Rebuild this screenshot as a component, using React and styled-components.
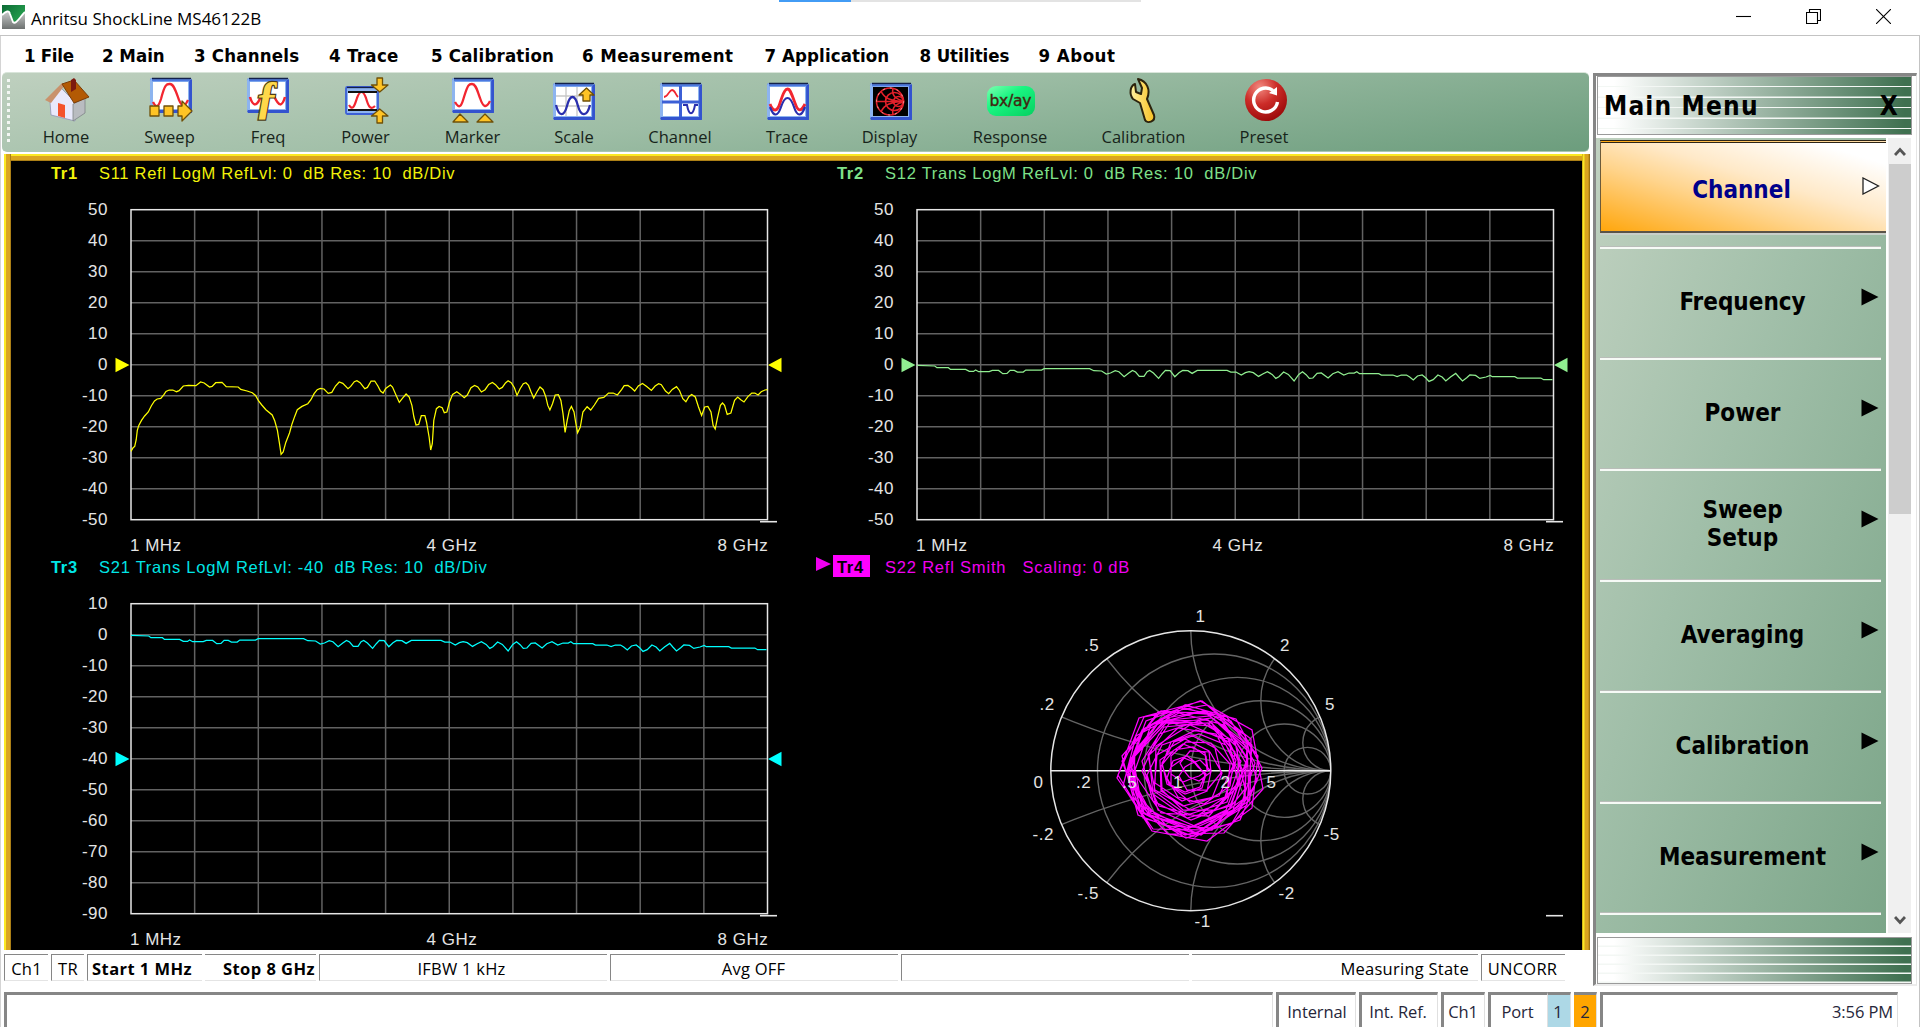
import React from "react";
import styled, { createGlobalStyle } from "styled-components";

const GlobalStyle = createGlobalStyle`
  * { box-sizing: border-box; }
  html, body { margin: 0; padding: 0; background: #fff; overflow: hidden; }
`;

const ui = `"Open Sans", "Noto Sans", sans-serif`;
const tahoma = `"DejaVu Sans Condensed", "DejaVu Sans", sans-serif`;
const arial = `"Liberation Sans", Arial, sans-serif`;

/* ---------- window shell ---------- */

const Window = styled.div`
  width: 1920px;
  height: 1027px;
  display: flex;
  flex-direction: column;
  overflow: hidden;
  background: #fff;
  font-family: ${ui};
  color: #000;
`;

const TitleBar = styled.header`
  position: relative;
  flex: none;
  height: 36px;
  display: flex;
  align-items: center;
  padding: 0 29px 2px 2px;
  border-bottom: 1px solid #c3c3c3;
`;

const TitleText = styled.h1`
  margin: 0 0 0 6px;
  padding-top: 3px;
  flex: 1;
  font-size: 17px;
  font-weight: 400;
  letter-spacing: 0;
`;

const WindowButtons = styled.div`
  display: flex;
  gap: 55px;
`;

const Progress = styled.div`
  position: absolute;
  left: 779px;
  top: 0;
  width: 362px;
  height: 2px;
  background: linear-gradient(to right, #429cf5 72px, #e3e3e3 72px);
`;

const Frame = styled.div`
  flex: 1;
  min-height: 0;
  display: flex;
  flex-direction: column;
  border-right: 1px solid #c3c3c3;
  box-shadow: inset 1px 0 0 #d4d4d4;
`;

const MenuBar = styled.nav`
  flex: none;
  height: 36px;
  display: flex;
  align-items: center;
  padding-left: 24px;
  padding-top: 2px;
`;

const MenuItem = styled.span`
  width: ${(p) => p.$w}px;
  font: 700 18.5px ${tahoma};
  letter-spacing: ${(p) => p.$track}px;
  white-space: nowrap;
`;

const Body = styled.div`
  flex: none;
  height: 914px;
  display: flex;
`;

const Main = styled.main`
  width: 1593px;
  display: flex;
  flex-direction: column;
`;

/* ---------- toolbar ---------- */

const ToolBar = styled.div`
  flex: none;
  height: 80px;
  width: 1587px;
  margin-left: 2px;
  display: flex;
  gap: 49px;
  padding: 5px 0 0 38px;
  border-radius: 5px;
  border-top: 1px solid #d9e5da;
  border-bottom: 1px solid #a9c7b1;
  background:
    linear-gradient(172deg, #bfd0bf 0%, #9dbda5 48%, #6c9d7d 100%);
`;

const Grip = styled.i`
  width: 3px;
  height: 66px;
  margin: 1px -19.5px 0 -33px;
  background: repeating-linear-gradient(to bottom, #f3f7f3 0 3px, transparent 3px 6px);
`;

const Tool = styled.button`
  width: ${(p) => p.$w}px;
  border: 0;
  padding: 0;
  background: none;
  display: flex;
  flex-direction: column;
  align-items: center;
  font: 400 16.5px/22px ${ui};
  letter-spacing: 0;
  color: #17241a;
`;

const ToolIcon = styled.span`
  height: 48px;
  display: flex;
  align-items: flex-start;
  justify-content: center;
  margin-left: ${(p) => p.$shift || 0}px;
`;

const ScreenIcon = ({ children, y = 5, h = 37, dark }) => (
  <g>
    <rect x="1" y={y} width="42" height={h} rx="2.5" fill="#3c5fd6" />
    <rect x="1" y={y} width="41" height={h - 1.5} rx="2.5" fill="#8db4ef" />
    <path d={`M2 ${y + h - 1.5}H41.5V${y + 2}`} fill="none" stroke="#3353cf" strokeWidth="2.8" />
    <path d={`M3 ${y + 2.2}H41`} stroke="#4c78e0" strokeWidth="2" />
    <path d={`M3 ${y + 0.6}H42`} stroke="#13204a" strokeWidth="1.5" />
    <rect x="4" y={y + 4} width="35" height={h - 8} fill={dark ? "#000" : "#fff"} />
    {children}
  </g>
);

const Gold = ({ d }) => <path d={d} fill="#ffc425" stroke="#6f5008" strokeWidth="1.3" strokeLinejoin="round" />;

const icons = {
  home: (
    <g>
      <path d="M5 24L16 10L30 24V43L6 37Z" fill="#e9e9fb" stroke="#8f94b5" strokeWidth=".8" />
      <path d="M28 26L40 20V35L28 43Z" fill="#b9bcc0" stroke="#7e8386" strokeWidth=".8" />
      <path d="M13 25L20 27V40L13 38Z" fill="#f4532c" />
      <path d="M0 22L17 5L20 7L6 25Z" fill="#c9926c" />
      <path d="M17 6L29 25L44 19L29 2Z" fill="#b35a04" stroke="#7c3d08" strokeWidth="1" />
      <path d="M26 2L29 0L31 2V11L26 14Z" fill="#7c1a10" />
    </g>
  ),
  sweep: (
    <g>
      <ScreenIcon y={0} h={35}>
        <path d="M4 24C8 32 10 27 12 21C16 5 18 6 21 6C25 6 27 14 30 22C34 31 36 28 39 22" fill="none" stroke="#f22630" strokeWidth="2.3" />
      </ScreenIcon>
      <Gold d="M1 28h9v10H1zM15 28h9v10h-9zM29 28h4V23L43 33L33 43V38H29z" />
    </g>
  ),
  freq: (
    <g>
      <ScreenIcon y={0} h={35}>
        <path d="M4 19C7 29 11 29 15 18M28 18C33 29 36 29 39 19" fill="none" stroke="#f22630" strokeWidth="2.5" />
      </ScreenIcon>
      <text x="9" y="35" fontFamily="Liberation Serif, serif" fontStyle="italic" fontWeight="700" fontSize="47" fill="#ffd84a" stroke="#4d3d16" strokeWidth="2.4" paintOrder="stroke">ƒ</text>
    </g>
  ),
  power: (
    <g>
      <rect x="1" y="9" width="32" height="27" rx="1.5" fill="#8db4ef" stroke="#3c5fd6" strokeWidth="1.8" />
      <path d="M2 9.500H33" stroke="#13204a" strokeWidth="1.3" />
      <rect x="3" y="14" width="28" height="18" fill="#fff" />
      <path d="M4 27C8 34 10 26 12 20C15 12 18 12 21 20C23 27 25 33 30 28" fill="none" stroke="#f22630" strokeWidth="2.2" />
      <path d="M3 14H32M3 32H32" stroke="#111" strokeWidth="2.2" />
      <Gold d="M32 0h5.500V7h5.500L34.700 14L26.500 7h5.500zM32 45h5.500V38h5.500L34.700 31L26.500 38h5.500z" />
    </g>
  ),
  marker: (
    <g>
      <ScreenIcon y={0} h={35}>
        <path d="M4 24C9 33 11 26 13 19C17 6 18 6 21 6C25 6 26 12 29 20C32 29 35 31 39 23" fill="none" stroke="#f22630" strokeWidth="2.3" />
      </ScreenIcon>
      <Gold d="M2 44L9 36L17 44zM26 44L34 36L42 44z" />
    </g>
  ),
  scale: (
    <ScreenIcon>
      <path d="M4 18H39M4 28H39M14 9V38M25 9V38" stroke="#c7c7c7" strokeWidth="1.3" />
      <path d="M4 27C7 39 12 39 15 28C18 16 23 16 26 28C29 39 35 39 38 27" fill="none" stroke="#2a2fae" strokeWidth="2.3" />
      <Gold d="M31 23V17H27L34.500 10L42 17H38V23z" />
    </ScreenIcon>
  ),
  channel: (
    <ScreenIcon>
      <path d="M21.500 8V39M3 24H40" stroke="#3c5fd6" strokeWidth="3" />
      <path d="M5 19C9 19 10 12 13 12C16 12 16 16 19 19" fill="none" stroke="#f22630" strokeWidth="1.800" />
      <path d="M24 27H28C30 38 34 38 36 27H39" fill="none" stroke="#2a2fae" strokeWidth="2" />
    </ScreenIcon>
  ),
  trace: (
    <ScreenIcon>
      <path d="M4 26C8 36 12 32 14 25C18 12 20 11 21.500 11C24 11 25 14 29 25C32 34 35 34 39 26" fill="none" stroke="#f22630" strokeWidth="2.800" />
      <path d="M4 29C8 40 12 38 15 29C19 17 24 17 28 29C31 38 35 40 39 29" fill="none" stroke="#2a2fae" strokeWidth="2.200" />
    </ScreenIcon>
  ),
  display: (
    <ScreenIcon dark>
      <g fill="none" stroke="#e3202a" strokeWidth="1.600">
        <circle cx="21" cy="23.500" r="13.500" />
        <circle cx="25.500" cy="23.500" r="9" />
        <circle cx="29.500" cy="23.500" r="5" />
        <path d="M7 23.500H35M12 13C15 20 21 23 35 23.500M12 34C15 27 21 24 35 23.500M24 10C22 19 29 22 35 23M24 37C22 28 29 25 35 24" />
      </g>
      <circle cx="21" cy="23.500" r="13.500" fill="none" stroke="#f3a0a4" strokeWidth="1" strokeDasharray="2 5" />
    </ScreenIcon>
  ),
  response: (
    <g>
      <rect x="-2" y="8" width="48" height="30" rx="9" fill="url(#mint)" />
      <text x="0.500" y="28" fontFamily="DejaVu Sans, sans-serif" fontSize="15.500" textLength="42" fill="#432410" stroke="#432410" strokeWidth=".4">bx/ay</text>
    </g>
  ),
  calibration: (
    <path
      d="M13 1L17 10L16 16L11 14L10 6C5 8 4 16 8 21L15 25L20 42C22 46 31 44 29 37L22 21C26 12 22 3 13 1Z"
      transform="translate(3 0)" fill="url(#wrench)" stroke="#2c230d" strokeWidth="2" strokeLinejoin="round"
    />
  ),
  preset: (
    <g>
      <circle cx="22" cy="22" r="21" fill="url(#redball)" />
      <path d="M29 12.500A12 12 0 1 0 33.500 24" fill="none" stroke="#fff" strokeWidth="3.400" />
      <path d="M25 15L33 9V17.500Z" fill="#fff" />
    </g>
  ),
};

const tools = [
  ["Home", "home", 53, 2], ["Sweep", "sweep", 56, 3], ["Freq", "freq", 43, 0], ["Power", "power", 54, 3],
  ["Marker", "marker", 62, 0], ["Scale", "scale", 43, 0], ["Channel", "channel", 71, 2], ["Trace", "trace", 45, 1],
  ["Display", "display", 62, 3], ["Response", "response", 81, 2], ["Calibration", "calibration", 88, 0], ["Preset", "preset", 55, 4],
];

const Icon = ({ name }) => (
  <svg width="44" height="46" viewBox="0 0 44 46" style={{ overflow: "visible" }}>
    {icons[name]}
  </svg>
);

/* ---------- traces ---------- */

const Screen = styled.section`
  flex: none;
  width: 1586px;
  height: 796px;
  margin: 2px 0 0 4px;
  padding: 7px 8px 0 7px;
  display: grid;
  grid-template-columns: 786px 1fr;
  grid-template-rows: 394px 1fr;
  background:
    linear-gradient(to right, #fbe924 0 2px, #daa520 2px 6px, #7d5a0c 7px) left / 7px 100% no-repeat,
    linear-gradient(to right, #b58a12 0, #fbe924 1px 2px, #daa520 3px 6px, #8a640e 8px) right / 8px 100% no-repeat,
    linear-gradient(to bottom, #fbe924 0 2px, #daa520 2px 6px, #7d5a0c 7px) top / 100% 7px no-repeat,
    #000;
`;

const Panel = styled.div`
  display: flex;
  flex-direction: column;
  min-width: 0;
  color: ${(p) => p.$color};
  font: 400 16.5px/24px ${arial};
`;

const PanelHead = styled.div`
  height: 24px;
  display: grid;
  grid-template-columns: 19px 17px 52px auto;
  align-items: start;
  white-space: pre;
`;

const ActiveMark = styled.i`
  grid-column: 2;
  width: 0;
  height: 0;
  margin-top: 2px;
  border-left: 15px solid currentColor;
  border-top: 7px solid transparent;
  border-bottom: 7px solid transparent;
`;

const TraceName = styled.b`
  grid-column: 3;
  justify-self: start;
  height: 22px;
  padding: 0 6px 0 4px;
  line-height: 24px;
  letter-spacing: 0.7px;
  color: ${(p) => (p.$active ? "#000" : "inherit")};
  background: ${(p) => (p.$active ? "#ff00ff" : "none")};
`;

const TraceInfo = styled.span`
  grid-column: 4;
  letter-spacing: ${(p) => p.$track}px;
`;

const ChartText = styled.text`
  font: 400 17px ${arial};
  fill: #e4e4e4;
  letter-spacing: 0.5px;
`;

const PX = 120, PY = 24.7, PW = 636.5, PH = 310;

const reflection = `250,903 254,892 257,888 260,868 262,840 265,825 270,810 276,797 283,785 289,766 295,752 300,746 307,744 313,733 317,723 323,719 330,719 337,724 342,721 350,707 360,705 374,706 383,695 390,698 400,710 405,708 412,697 424,696 432,709 455,710 460,717 472,722 482,727 488,735 494,752 500,764 508,778 520,794 525,812 530,840 534,880 537,912 541,905 546,876 553,848 558,820 563,798 568,778 577,768 588,760 594,748 600,730 606,718 612,714 619,716 627,729 634,726 641,707 648,695 655,699 665,715 670,708 677,694 682,691 688,697 697,715 702,711 709,692 716,692 722,707 727,722 732,728 737,714 746,704 750,710 757,735 763,756 769,744 776,731 782,740 787,765 791,800 795,824 800,822 805,796 812,796 815,815 820,860 823,899 826,880 829,810 834,775 839,768 845,772 849,787 854,785 859,755 865,732 873,724 880,732 887,742 893,734 900,712 907,705 913,710 920,725 927,718 934,702 941,696 947,703 954,716 960,711 966,698 971,691 977,697 983,712 988,735 994,715 1000,700 1005,697 1010,705 1015,725 1020,743 1026,725 1032,710 1038,718 1043,738 1047,765 1051,779 1056,760 1061,734 1067,733 1072,750 1076,790 1080,846 1084,810 1088,780 1092,768 1097,785 1100,815 1104,847 1109,830 1114,785 1122,769 1129,779 1136,764 1144,744 1154,741 1163,728 1172,728 1180,734 1188,718 1193,706 1200,705 1207,713 1213,722 1220,707 1228,699 1236,708 1245,720 1252,707 1259,700 1264,703 1272,722 1278,730 1285,717 1293,709 1299,721 1305,745 1311,754 1317,738 1322,732 1329,740 1335,770 1341,795 1347,770 1353,768 1359,785 1363,825 1367,836 1371,805 1377,765 1381,758 1385,765 1390,792 1397,788 1404,750 1410,740 1416,748 1422,755 1430,738 1437,728 1443,728 1449,734 1455,724 1462,719 1467,718`;

const transmission = `262,645 296,647 300,652 322,652 326,657 355,657 362,663 370,663 374,659 380,664 400,664 406,660 418,660 426,670 434,669 440,660 448,660 454,665 465,665 470,659 500,659 505,655 592,655 600,661 615,662 624,671 632,668 641,661 648,664 658,679 667,668 674,660 680,665 687,678 696,678 702,664 707,660 714,668 724,684 731,670 737,660 746,661 755,679 763,667 770,660 780,661 788,669 798,660 855,660 862,665 872,665 882,674 890,667 897,664 905,667 915,678 924,670 932,664 941,672 948,684 954,679 963,665 972,672 983,692 992,672 999,664 1006,673 1012,684 1019,683 1027,669 1035,668 1048,683 1057,670 1067,664 1078,674 1088,668 1098,668 1103,664 1108,670 1145,670 1150,674 1172,674 1180,679 1188,674 1198,674 1204,680 1211,689 1219,677 1228,674 1235,683 1241,693 1249,688 1258,674 1266,680 1273,692 1282,680 1292,669 1298,680 1305,692 1313,682 1319,674 1330,675 1338,684 1350,680 1358,675 1362,679 1405,679 1410,683 1455,683 1460,688 1477,688`;

/* Sweep samples are stored on a 1217-unit span with 93 units per division, zero level at 643. */
const samples = (raw, zeroDiv) => {
  const pts = raw.split(" ").map((p) => p.split(",").map(Number));
  const first = pts[0][0];
  return pts
    .map(([x, y]) => `${(PX + ((x - first) / 1217) * PW).toFixed(1)},${(PY + zeroDiv * 31 + (y - 643) / 3).toFixed(1)}`)
    .join(" ");
};

const Rect = ({ top, refDiv, zeroDiv, data, color }) => {
  const steps = [...Array(11).keys()];
  const ry = PY + refDiv * 31 + 0.3;
  return (
    <svg width="785" height="370">
      <g stroke="#626262" strokeWidth="1.5">
        {steps.slice(1, 10).map((i) => (
          <React.Fragment key={i}>
            <line x1={PX + i * PW / 10} x2={PX + i * PW / 10} y1={PY} y2={PY + PH} />
            <line x1={PX} x2={PX + PW} y1={PY + i * 31} y2={PY + i * 31} />
          </React.Fragment>
        ))}
      </g>
      <rect x={PX} y={PY} width={PW} height={PH} fill="none" stroke="#e6e6e6" strokeWidth="1.5" />
      <path d="M749 336.700H766" stroke="#e6e6e6" strokeWidth="1.600" />
      {steps.map((i) => (
        <ChartText key={i} x="97" y={PY + i * 31 + 5.6} textAnchor="end">{top - i * 10}</ChartText>
      ))}
      <ChartText x="119" y="365.500">1 MHz</ChartText>
      <ChartText x="415.500" y="365.500">4 GHz</ChartText>
      <ChartText x="706.500" y="365.500">8 GHz</ChartText>
      <polyline points={samples(data, zeroDiv)} fill="none" stroke={color} strokeWidth="1.250" />
      <path d={`M104.500 ${ry - 7.3}V${ry + 7.3}L118.500 ${ry}ZM770.500 ${ry - 7.3}V${ry + 7.3}L757 ${ry}Z`} fill={color} />
    </svg>
  );
};

const CX = 393.8, CY = 191.7, R = 140;

const smithLabels = [
  ["1", 398.5, 43], [".5", 287, 72], [".2", 242.5, 130.5], ["2", 483, 72], ["5", 528, 130.5], ["0", 236.5, 208.5],
  [".2", 279, 208.5], [".5", 325, 208.5], ["1", 376, 208.5], ["2", 423.5, 208.5], ["5", 469.5, 208.5], ["-.2", 235.5, 260.5],
  ["-5", 526.5, 260.5], ["-.5", 280.5, 319.5], ["-2", 481.5, 319.5], ["-1", 397.5, 347.5],
];

const smithTrace = () => {
  const pts = [];
  for (let i = 0; i < 230; i++) {
    const lobe = Math.abs(Math.sin((Math.PI * i) / 41 + 0.12));
    const ripple = 0.92 + 0.13 * Math.sin(i * 0.53) * Math.cos(i * 0.19);
    const r = 69 * Math.pow(lobe, 0.8) * ripple + 3;
    const a = -i * 0.84 - 0.9 * Math.sin(i / 9);
    const x = CX + 1 + r * Math.cos(a) * 1.02 - (r > 50 ? 2 : 0);
    pts.push(`${Math.round(x)},${Math.round(CY - 0.5 + r * Math.sin(a))}`);
  }
  return pts.join(" ");
};

const Smith = () => (
  <svg width="785" height="370">
    <defs>
      <clipPath id="unit"><circle cx={CX} cy={CY} r={R} /></clipPath>
    </defs>
    <g clipPath="url(#unit)" fill="none" stroke="#646464" strokeWidth="1.400">
      {[0.2, 0.5, 1, 2, 5].map((v) => (
        <React.Fragment key={v}>
          <circle cx={CX + (R * v) / (1 + v)} cy={CY} r={R / (1 + v)} />
          <circle cx={CX + R} cy={CY - R / v} r={R / v} />
          <circle cx={CX + R} cy={CY + R / v} r={R / v} />
        </React.Fragment>
      ))}
    </g>
    <circle cx={CX} cy={CY} r={R} fill="none" stroke="#e6e6e6" strokeWidth="1.500" />
    <path d={`M${CX - R} ${CY}H${CX + R}`} stroke="#ededed" strokeWidth="1.600" />
    <polyline points={smithTrace()} fill="none" stroke="#ff00ff" strokeWidth="1.250" />
    {smithLabels.map(([t, x, y], i) => <ChartText key={i} x={x} y={y}>{t}</ChartText>)}
    <path d="M749 336.700H766" stroke="#e6e6e6" strokeWidth="1.600" />
  </svg>
);

/* ---------- channel status ---------- */

const StatusRow = styled.div`
  flex: none;
  height: 28px;
  margin: 4px 0 0 4px;
  display: flex;
  gap: 3px;
`;

const StatusCell = styled.div`
  width: ${(p) => p.$w}px;
  height: 27px;
  padding: 1px ${(p) => p.$pr || 0}px 0 ${(p) => p.$pl || 0}px;
  display: flex;
  align-items: center;
  justify-content: ${(p) => p.$align || "center"};
  border-top: 1.5px solid #868686;
  border-bottom: 1px solid #e4e4e4;
  border-left: ${(p) => (p.$open ? "0" : "1.5px solid #868686")};
  font-size: 16.5px;
  font-weight: ${(p) => (p.$bold ? 700 : 400)};
  letter-spacing: ${(p) => (p.$bold ? 0.45 : 0.25)}px;
  white-space: nowrap;
`;

const BottomBar = styled.footer`
  flex: none;
  height: 36px;
  margin-top: 6px;
  padding-left: 4px;
  display: flex;
  gap: 3px;
`;

const BottomCell = styled.div`
  width: ${(p) => p.$w}px;
  padding: 0 ${(p) => p.$pr || 0}px 1px 0;
  display: flex;
  align-items: center;
  justify-content: ${(p) => p.$align || "center"};
  border-top: 3px solid #868686;
  border-left: ${(p) => (p.$fill ? 0 : 3)}px solid #868686;
  border-right: 1px solid #e0e0e0;
  margin-left: ${(p) => p.$pull || 0}px;
  background: ${(p) => p.$fill || "#fff"};
  font-size: 16.5px;
  letter-spacing: -0.1px;
  color: #26263a;
  white-space: nowrap;
`;

/* ---------- side menu ---------- */

const Side = styled.aside`
  width: 324px;
  height: 913px;
  margin-top: 1px;
  display: flex;
  flex-direction: column;
  border-left: 3px solid #868686;
  border-top: 3px solid #868686;
  border-right: 1px solid #e6e6e6;
  border-bottom: 2px solid #ececec;
`;

const Banner = styled.div`
  flex: none;
  width: 315px;
  height: ${(p) => p.$h}px;
  margin-left: 1px;
  border: 1px solid #9a9a9a;
  display: flex;
  align-items: center;
  justify-content: space-between;
  padding: 1px 12px 0 6px;
  font: 700 26px ${tahoma};
  letter-spacing: 1.15px;
  background:
    repeating-linear-gradient(to bottom, transparent 0 ${(p) => p.$step - 1.6}px, #f3f7f4 ${(p) => p.$step - 1.4}px ${(p) => p.$step}px),
    linear-gradient(to right, #fff 5%, #3f7050 98%);
`;

const SideBody = styled.div`
  flex: none;
  height: 795px;
  margin: 3px 0 4px;
  display: flex;
`;

const Keys = styled.div`
  width: 290px;
  overflow: hidden;
  background: linear-gradient(110deg, #c0d1c0 0%, #a1bfa9 42%, #7ba588 100%);
`;

const Key = styled.div`
  position: relative;
  width: 281px;
  height: 111px;
  margin-left: 4px;
  display: flex;
  align-items: center;
  justify-content: center;
  padding: 0 0 4px 4px;
  border-top: 2px solid #f6faf6;
  box-shadow: 0 -1px 0 #b9bdb9;
  font: 700 24px/28px ${tahoma};
  text-align: center;
  white-space: pre;
`;

const ActiveKey = styled(Key)`
  width: 286px;
  height: 93px;
  margin: 2px 0 14px 4px;
  padding: 6px 4px 0 0;
  border-top: 3px double #2c2416;
  border-left: 1px solid #6b5a3a;
  border-bottom: 2px solid #5a5348;
  box-shadow: 0 2px 0 #c9cfc9;
  color: #00008b;
  background: linear-gradient(17deg, #ffa60c 0%, #ffd48c 38%, #ffe9c8 58%, #fff 88%);
`;

const KeyArrow = styled.svg`
  position: absolute;
  right: ${(p) => p.$right}px;
  top: ${(p) => p.$top}px;
`;

const Scroll = styled.div`
  width: 23px;
  margin-left: 2px;
  display: flex;
  flex-direction: column;
  align-items: center;
  background: #f0f0f0;
`;

const Thumb = styled.div`
  width: 22px;
  height: 350px;
  background: #cdcdcd;
`;

const ScrollArrow = styled.svg`
  margin: ${(p) => p.$m};
`;

const menus = [["1 File", 78, -0.3], ["2 Main", 92, 0], ["3 Channels", 135, 0.2], ["4 Trace", 102, 0.35], ["5 Calibration", 151, 0.2], ["6 Measurement", 182.5, 0.4], ["7 Application", 155, 0.1], ["8 Utilities", 119, -0.1], ["9 About", 90, 0.5]];
const keys = ["Frequency", "Power", "Sweep\nSetup", "Averaging", "Calibration", "Measurement", " "];

export default function App() {
  return (
    <Window>
      <GlobalStyle />
      <svg width="0" height="0" style={{ position: "absolute" }}>
        <defs>
          <linearGradient id="mint" x1="0" y1="0" x2="1" y2="1"><stop offset="0" stopColor="#7dffb0" /><stop offset=".4" stopColor="#19f581" /><stop offset="1" stopColor="#05d060" /></linearGradient>
          <linearGradient id="wrench" x1="0" y1="0" x2="1" y2="0"><stop offset="0" stopColor="#fff2a0" /><stop offset="1" stopColor="#f8c022" /></linearGradient>
          <radialGradient id="redball" cx=".35" cy=".2" r=".9"><stop offset="0" stopColor="#f28a80" /><stop offset=".45" stopColor="#cc2c28" /><stop offset="1" stopColor="#930404" /></radialGradient>
          <linearGradient id="logoGreen" x1="0" y1="0" x2="1" y2="1"><stop offset="0" stopColor="#0c6a35" /><stop offset="1" stopColor="#2fb457" /></linearGradient>
          <linearGradient id="logoGray" x1="0" y1="0" x2="0" y2="1"><stop offset="0" stopColor="#c9cccb" /><stop offset="1" stopColor="#6d7170" /></linearGradient>
        </defs>
      </svg>
      <TitleBar>
        <svg width="23" height="24" viewBox="0 0 23 24">
          <rect width="23" height="24" fill="url(#logoGreen)" />
          <path d="M0 10C4 6 7 5 8 9L11 17C14 20 17 13 23 7V24H0Z" fill="url(#logoGray)" />
          <path d="M0 10C4 6 7 5 8 9L11 17C14 20 17 13 23 7" fill="none" stroke="#fff" strokeWidth="1.800" />
        </svg>
        <TitleText>Anritsu ShockLine MS46122B</TitleText>
        <WindowButtons>
          {["M0 7.500H15", "M.5 3.500H11.500V14.500H.5ZM3.500 3.500V.5H14.500V11.500H11.500", "M0 0L15 15M15 0L0 15"].map((d) => (
            <svg key={d} width="15" height="15"><path d={d} fill="none" stroke="#000" strokeWidth="1.100" /></svg>
          ))}
        </WindowButtons>
        <Progress />
      </TitleBar>
      <Frame>
        <MenuBar>{menus.map(([t, w, track]) => <MenuItem key={t} $w={w} $track={track}>{t}</MenuItem>)}</MenuBar>
        <Body>
          <Main>
            <ToolBar>
              <Grip />
              {tools.map(([label, icon, w, shift]) => (
                <Tool key={label} $w={w}>
                  <ToolIcon $shift={shift}><Icon name={icon} /></ToolIcon>
                  {label}
                </Tool>
              ))}
            </ToolBar>
            <Screen>
              <Panel $color="#f2f20a">
                <PanelHead><TraceName>Tr1</TraceName><TraceInfo $track={0.7}>{"S11 Refl LogM RefLvl: 0  dB Res: 10  dB/Div"}</TraceInfo></PanelHead>
                <Rect top={50} refDiv={5} zeroDiv={5} data={reflection} color="#ffff00" />
              </Panel>
              <Panel $color="#7fe08a">
                <PanelHead><TraceName>Tr2</TraceName><TraceInfo $track={0.75}>{"S12 Trans LogM RefLvl: 0  dB Res: 10  dB/Div"}</TraceInfo></PanelHead>
                <Rect top={50} refDiv={5} zeroDiv={5} data={transmission} color="#90ee90" />
              </Panel>
              <Panel $color="#00e6e6">
                <PanelHead><TraceName>Tr3</TraceName><TraceInfo $track={0.75}>{"S21 Trans LogM RefLvl: -40  dB Res: 10  dB/Div"}</TraceInfo></PanelHead>
                <Rect top={10} refDiv={5} zeroDiv={1} data={transmission} color="#00ffff" />
              </Panel>
              <Panel $color="#f000f0">
                <PanelHead><ActiveMark /><TraceName $active>Tr4</TraceName><TraceInfo $track={0.8}>{"S22 Refl Smith   Scaling: 0 dB"}</TraceInfo></PanelHead>
                <Smith />
              </Panel>
            </Screen>
            <StatusRow>
              <StatusCell $w={44}>Ch1</StatusCell>
              <StatusCell $w={33}>TR</StatusCell>
              <StatusCell $w={115} $bold $align="flex-start" $pl={4}>Start 1 MHz</StatusCell>
              <StatusCell $w={111} $bold $open $align="flex-end" $pr={1}>Stop 8 GHz</StatusCell>
              <StatusCell $w={288} $pr={4}>IFBW 1 kHz</StatusCell>
              <StatusCell $w={288} $pr={2}>Avg OFF</StatusCell>
              <StatusCell $w={288} />
              <StatusCell $w={286} $open $align="flex-end" $pr={9}>Measuring State</StatusCell>
              <StatusCell $w={84} $pr={2}>UNCORR</StatusCell>
            </StatusRow>
          </Main>
          <Side>
            <Banner $h={59} $step={10.5}><span>Main Menu</span><span>X</span></Banner>
            <SideBody>
              <Keys>
                <ActiveKey>
                  Channel
                  <KeyArrow width="18" height="18" $right={6} $top={34}><path d="M1 1V17L16.500 9Z" fill="#fff" stroke="#222" strokeWidth="1.300" /></KeyArrow>
                </ActiveKey>
                {keys.map((k) => (
                  <Key key={k}>
                    {k}
                    <KeyArrow width="18" height="18" $right={2} $top={39}><path d="M.5 .5V17.500L17.500 9Z" fill="#000" /></KeyArrow>
                  </Key>
                ))}
              </Keys>
              <Scroll>
                <ScrollArrow $m="9px 0 8px" width="12" height="9" viewBox="0 0 12 9"><path d="M1 8L6 2.500L11 8" fill="none" stroke="#555" strokeWidth="2.800" /></ScrollArrow>
                <Thumb />
                <ScrollArrow $m="auto 0 8px" width="12" height="9" viewBox="0 0 12 9"><path d="M1 1L6 6.500L11 1" fill="none" stroke="#555" strokeWidth="2.800" /></ScrollArrow>
              </Scroll>
            </SideBody>
            <Banner $h={47} $step={9} />
          </Side>
        </Body>
        <BottomBar>
          <BottomCell $w={1269} />
          <BottomCell $w={80}>Internal</BottomCell>
          <BottomCell $w={79} $pr={3}>Int. Ref.</BottomCell>
          <BottomCell $w={44} $pr={2}>Ch1</BottomCell>
          <BottomCell $w={60} $pr={3}>Port</BottomCell>
          <BottomCell $w={23} $fill="#add8e6" $pull={-3} $pr={2}>1</BottomCell>
          <BottomCell $w={23} $fill="#ffa500">2</BottomCell>
          <BottomCell $w={298} $align="flex-end" $pr={4}>3:56 PM</BottomCell>
        </BottomBar>
      </Frame>
    </Window>
  );
}
